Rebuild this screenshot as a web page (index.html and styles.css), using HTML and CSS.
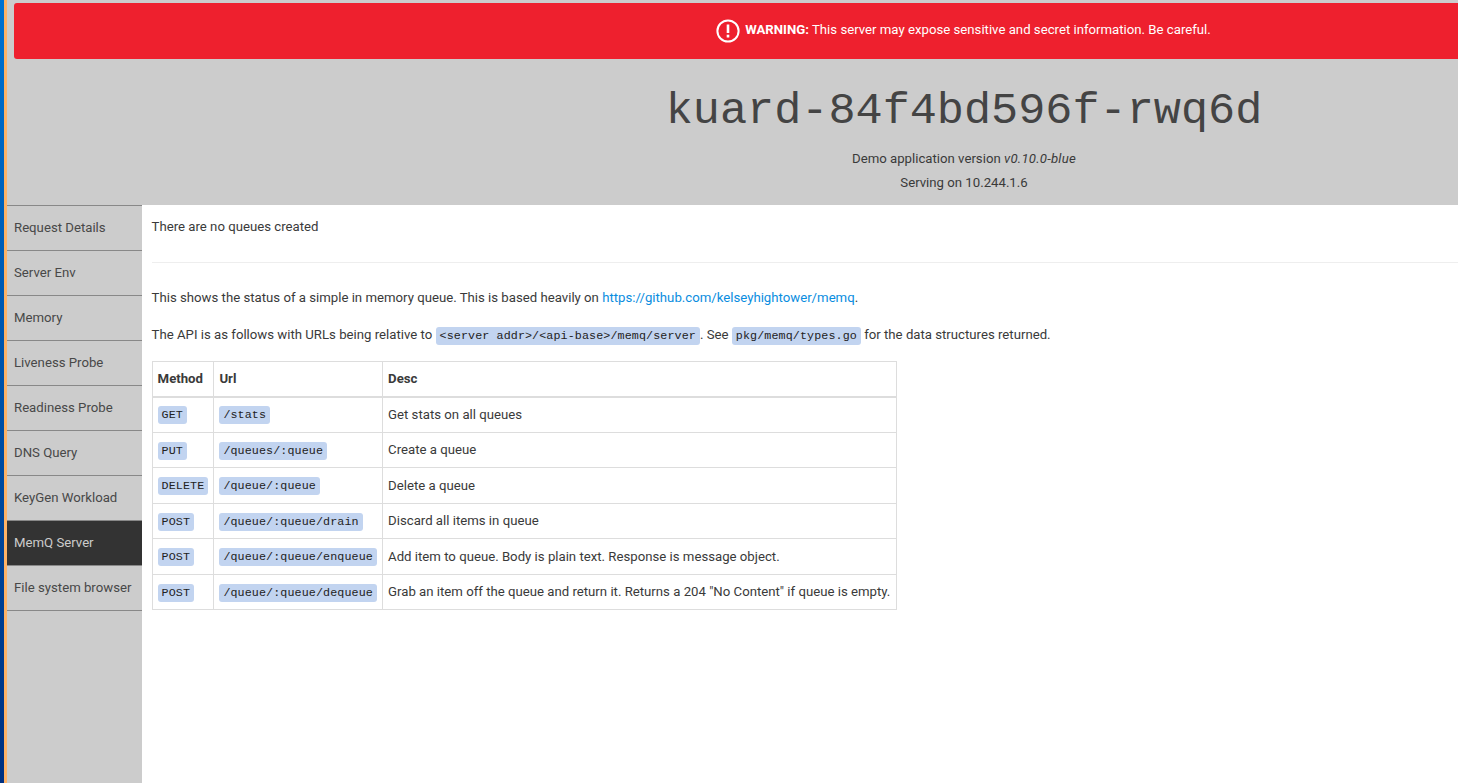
FILE: index.html
```html
<!DOCTYPE html>
<html lang="en">
<head>
    <meta charset="UTF-8">
    <title>KUAR Demo</title>
    <link rel="stylesheet" href="styles.css">
</head>
<body>
    <div class="page">
        <header class="top">
            <div class="warning">
                <svg class="warning-icon" width="24" height="24" viewBox="0 0 24 24">
                    <circle cx="12" cy="12" r="10.6" fill="none" stroke="#fff" stroke-width="2"/>
                    <rect x="10.7" y="5.5" width="2.6" height="8.5" fill="#fff"/>
                    <rect x="10.7" y="15.7" width="2.6" height="2.8" fill="#fff"/>
                </svg>
                <span><b>WARNING:</b> This server may expose sensitive and secret information. Be careful.</span>
            </div>
            <h1 class="title">kuard-84f4bd596f-rwq6d</h1>
            <p class="sub">Demo application version <i>v0.10.0-blue</i></p>
            <p class="sub">Serving on 10.244.1.6</p>
        </header>
        <div class="main">
            <nav class="nav">
                <a href="#">Request Details</a>
                <a href="#">Server Env</a>
                <a href="#">Memory</a>
                <a href="#">Liveness Probe</a>
                <a href="#">Readiness Probe</a>
                <a href="#">DNS Query</a>
                <a href="#">KeyGen Workload</a>
                <a href="#" class="active">MemQ Server</a>
                <a href="#">File system browser</a>
            </nav>
            <main class="content">
                <p class="empty">There are no queues created</p>
                <hr>
                <p>This shows the status of a simple in memory queue. This is based heavily on <a href="#">https://github.com/kelseyhightower/memq</a>.</p>
                <p class="api">The API is as follows with URLs being relative to <code>&lt;server addr&gt;/&lt;api-base&gt;/memq/server</code>. See <code>pkg/memq/types.go</code> for the data structures returned.</p>
                <table>
                    <thead>
                        <tr>
                            <th>Method</th>
                            <th>Url</th>
                            <th>Desc</th>
                        </tr>
                    </thead>
                    <tbody>
                        <tr>
                            <td><code>GET</code></td>
                            <td><code>/stats</code></td>
                            <td>Get stats on all queues</td>
                        </tr>
                        <tr>
                            <td><code>PUT</code></td>
                            <td><code>/queues/:queue</code></td>
                            <td>Create a queue</td>
                        </tr>
                        <tr>
                            <td><code>DELETE</code></td>
                            <td><code>/queue/:queue</code></td>
                            <td>Delete a queue</td>
                        </tr>
                        <tr>
                            <td><code>POST</code></td>
                            <td><code>/queue/:queue/drain</code></td>
                            <td>Discard all items in queue</td>
                        </tr>
                        <tr>
                            <td><code>POST</code></td>
                            <td><code>/queue/:queue/enqueue</code></td>
                            <td>Add item to queue. Body is plain text. Response is message object.</td>
                        </tr>
                        <tr>
                            <td><code>POST</code></td>
                            <td><code>/queue/:queue/dequeue</code></td>
                            <td>Grab an item off the queue and return it. Returns a 204 "No Content" if queue is empty.</td>
                        </tr>
                    </tbody>
                </table>
            </main>
        </div>
    </div>
</body>
</html>
```

FILE: styles.css
```css
html, body {
    height: 100%;
    margin: 0;
    overflow: hidden;
}
body {
    font-family: Roboto, sans-serif;
    font-size: 13.2px;
    line-height: 20px;
    color: #3a3a3a;
    background: linear-gradient(#0072d0, #003080) no-repeat 0 0 / 4px 100%;
}
.page {
    width: 1914px;
    height: 100%;
    display: flex;
    flex-direction: column;
    border-left: 3px solid #ffb366;
    margin-left: 4px;
    background-color: #cccccc;
}
.top {
    flex: none;
    height: 205px;
    text-align: center;
    padding-top: 3px;
    box-sizing: border-box;
}
.warning {
    display: flex;
    align-items: center;
    justify-content: center;
    gap: 5px;
    height: 56px;
    margin: 0 0 0 7px;
    padding: 0 8px 3px 0;
    box-sizing: border-box;
    background-color: #ee202e;
    color: #ffffff;
    border-radius: 3px;
}
.warning-icon {
    margin-top: 2px;
}
.title {
    margin: 25px 0 0;
    font-family: "Liberation Mono", monospace;
    font-size: 45.2px;
    line-height: 55px;
    font-weight: normal;
    color: #444444;
}
.sub {
    margin: 0;
    height: 24px;
    line-height: 24px;
}
.sub:first-of-type {
    margin-top: 8px;
}
.sub i {
    letter-spacing: 0.22px;
}
.main {
    flex: 1;
    display: flex;
}
.nav {
    flex: none;
    width: 135px;
    border-top: 1px solid #888888;
    box-sizing: border-box;
    align-self: flex-start;
}
.nav a {
    display: block;
    height: 45px;
    padding: 0 7px;
    line-height: 44px;
    box-sizing: border-box;
    border-bottom: 1px solid #888888;
    color: #484848;
    text-decoration: none;
}
.nav a.active {
    background-color: #333333;
    color: #cccccc;
}
.content {
    flex: 1;
    background-color: #ffffff;
    padding: 11px 0 0 9.6px;
}
.content p {
    margin: 0 0 16px;
    line-height: 21px;
}
.content p a {
    color: #0a8de0;
    text-decoration: none;
}
.content .empty {
    margin-bottom: 25px;
}
.content .api {
    margin-bottom: 13.9px;
}
hr {
    height: 1px;
    margin: 0 0 24px;
    border: none;
    background-color: #eeeeee;
}
code {
    font-family: "Liberation Mono", monospace;
    font-size: 11.7px;
    letter-spacing: 0.11px;
    padding: 2px 4px;
    background-color: #c2d4f0;
    border-radius: 3px;
    color: #222222;
}
table {
    width: 745px;
    border-collapse: collapse;
}
th, td {
    padding: 0 5px;
    height: 35.5px;
    border: 1px solid #dddddd;
    text-align: left;
    box-sizing: border-box;
}
th {
    height: 35.5px;
    border-bottom-width: 2px;
}
```
